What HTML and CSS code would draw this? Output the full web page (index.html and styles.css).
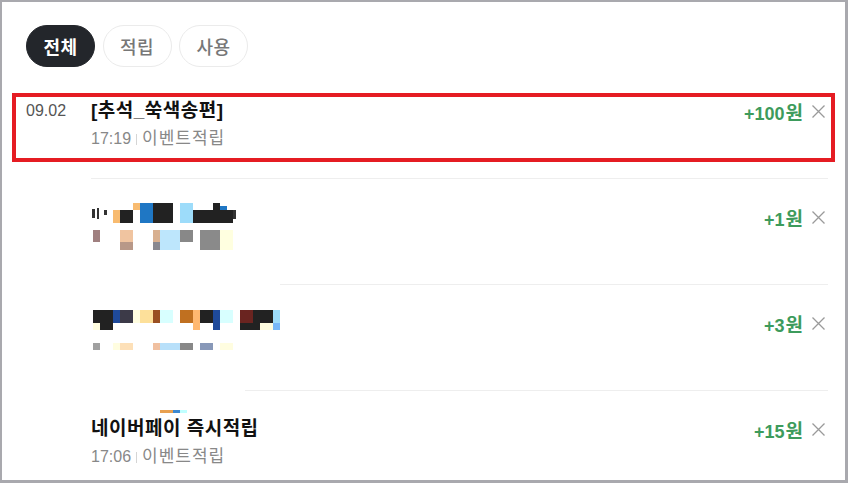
FILE: index.html
```html
<!DOCTYPE html>
<html lang="ko">
<head>
    <meta charset="UTF-8">
    <meta name="viewport" content="width=device-width, initial-scale=1.0">
    <title>포인트 내역</title>
    <link rel="stylesheet" href="styles.css">
</head>
<body>
    <div class="frame">
        <div class="tabs">
            <button type="button" class="tab active">전체</button>
            <button type="button" class="tab">적립</button>
            <button type="button" class="tab">사용</button>
        </div>

        <ul class="history">
            <li class="item first">
                <div class="date">09.02</div>
                <div class="body">
                    <div class="info">
                        <p class="title">[추석_쑥색송편]</p>
                        <p class="sub"><span>17:19</span><i class="bar"></i><span class="kind">이벤트적립</span></p>
                    </div>
                    <div class="side">
                        <span class="amount">+100<span class="won">원</span></span>
                        <button type="button" class="remove" aria-label="삭제">
                            <svg width="13" height="13" viewBox="0 0 13 13"><path d="M0.5 0.5 12.5 12.5M12.5 0.5 0.5 12.5" stroke="#9a9a9a" stroke-width="1.3" fill="none"/></svg>
                        </button>
                    </div>
                </div>
                <div class="highlight"></div>
            </li>

            <li class="item">
                <div class="date"></div>
                <div class="body">
                    <div class="info">
                        <svg class="mosaic" width="200" height="52" viewBox="0 0 200 52">
                            <rect x="1" y="4" width="3" height="9" fill="#333"/>
                            <rect x="6" y="3" width="2" height="11" fill="#333"/>
                            <rect x="13" y="5" width="3" height="5" fill="#333"/>
                            <rect x="22" y="5" width="7" height="13" fill="#f8bb70"/>
                            <rect x="29" y="5" width="13" height="13" fill="#222"/>
                            <rect x="42" y="-2" width="7" height="7" fill="#f8bb70"/>
                            <rect x="49" y="-2" width="13" height="20" fill="#1f77c4"/>
                            <rect x="62" y="-2" width="20" height="20" fill="#222"/>
                            <rect x="89" y="-2" width="13" height="20" fill="#9ddcfa"/>
                            <rect x="102" y="5" width="40" height="13" fill="#222"/>
                            <rect x="122" y="-2" width="7" height="7" fill="#222"/>
                            <rect x="129" y="1" width="7" height="4" fill="#1f77c4"/>
                            <rect x="142" y="5" width="3" height="9" fill="#333"/>
                            <rect x="2" y="25" width="7" height="12" fill="#a08080"/>
                            <rect x="29" y="25" width="13" height="12" fill="#f0c4a0"/>
                            <rect x="29" y="37" width="13" height="8" fill="#b89888"/>
                            <rect x="62" y="25" width="7" height="12" fill="#d8b090"/>
                            <rect x="62" y="37" width="7" height="8" fill="#888890"/>
                            <rect x="69" y="25" width="20" height="20" fill="#bde6fc"/>
                            <rect x="89" y="25" width="13" height="12" fill="#888"/>
                            <rect x="109" y="25" width="20" height="20" fill="#8a8a8a"/>
                            <rect x="129" y="25" width="13" height="20" fill="#ffffe0"/>
                        </svg>
                    </div>
                    <div class="side">
                        <span class="amount">+1<span class="won">원</span></span>
                        <button type="button" class="remove" aria-label="삭제">
                            <svg width="13" height="13" viewBox="0 0 13 13"><path d="M0.5 0.5 12.5 12.5M12.5 0.5 0.5 12.5" stroke="#9a9a9a" stroke-width="1.3" fill="none"/></svg>
                        </button>
                    </div>
                </div>
            </li>

            <li class="item">
                <div class="date"></div>
                <div class="body">
                    <span class="cover wide"></span>
                    <div class="info">
                        <svg class="mosaic" width="200" height="52" viewBox="0 0 200 52">
                            <rect x="2" y="-1" width="20" height="13" fill="#222"/>
                            <rect x="9" y="12" width="13" height="7" fill="#222"/>
                            <rect x="2" y="12" width="7" height="7" fill="#fffde0"/>
                            <rect x="22" y="-1" width="7" height="13" fill="#1f4a9a"/>
                            <rect x="29" y="-1" width="13" height="13" fill="#3c3a48"/>
                            <rect x="42" y="-1" width="7" height="13" fill="#fffde0"/>
                            <rect x="49" y="-1" width="13" height="13" fill="#fde09a"/>
                            <rect x="62" y="-1" width="7" height="13" fill="#9a4f22"/>
                            <rect x="69" y="-1" width="13" height="13" fill="#d8ffff"/>
                            <rect x="89" y="-1" width="13" height="13" fill="#c07020"/>
                            <rect x="102" y="-1" width="7" height="20" fill="#ffb870"/>
                            <rect x="109" y="-1" width="13" height="13" fill="#222"/>
                            <rect x="122" y="-1" width="7" height="20" fill="#1f4a9a"/>
                            <rect x="129" y="-1" width="13" height="13" fill="#d8ffff"/>
                            <rect x="149" y="-1" width="13" height="13" fill="#6a2420"/>
                            <rect x="149" y="12" width="20" height="7" fill="#222"/>
                            <rect x="162" y="-1" width="20" height="13" fill="#222"/>
                            <rect x="169" y="12" width="13" height="7" fill="#fffde0"/>
                            <rect x="182" y="-1" width="7" height="13" fill="#9ddcfa"/>
                            <rect x="182" y="12" width="7" height="7" fill="#78b8f8"/>
                            <rect x="2" y="32" width="7" height="7" fill="#a0a0a0"/>
                            <rect x="22" y="32" width="7" height="7" fill="#fffde0"/>
                            <rect x="29" y="32" width="13" height="7" fill="#fde0b8"/>
                            <rect x="62" y="32" width="7" height="7" fill="#f0c0a0"/>
                            <rect x="69" y="32" width="20" height="7" fill="#b8e0fa"/>
                            <rect x="89" y="32" width="13" height="7" fill="#888"/>
                            <rect x="109" y="32" width="13" height="7" fill="#8898b8"/>
                            <rect x="129" y="32" width="13" height="7" fill="#fffde0"/>
                        </svg>
                    </div>
                    <div class="side">
                        <span class="amount">+3<span class="won">원</span></span>
                        <button type="button" class="remove" aria-label="삭제">
                            <svg width="13" height="13" viewBox="0 0 13 13"><path d="M0.5 0.5 12.5 12.5M12.5 0.5 0.5 12.5" stroke="#9a9a9a" stroke-width="1.3" fill="none"/></svg>
                        </button>
                    </div>
                </div>
            </li>

            <li class="item">
                <div class="date"></div>
                <div class="body">
                    <span class="cover narrow"></span>
                    <div class="info">
                        <p class="title">
                            <svg class="bits" width="27" height="3" viewBox="0 0 27 3">
                                <rect x="0" y="0" width="13" height="3" fill="#e8a050"/>
                                <rect x="13" y="0" width="7" height="3" fill="#3c88d0"/>
                                <rect x="20" y="0" width="7" height="3" fill="#c0ffff"/>
                            </svg>
                            네이버페이 즉시적립
                        </p>
                        <p class="sub"><span>17:06</span><i class="bar"></i><span class="kind">이벤트적립</span></p>
                    </div>
                    <div class="side">
                        <span class="amount">+15<span class="won">원</span></span>
                        <button type="button" class="remove" aria-label="삭제">
                            <svg width="13" height="13" viewBox="0 0 13 13"><path d="M0.5 0.5 12.5 12.5M12.5 0.5 0.5 12.5" stroke="#9a9a9a" stroke-width="1.3" fill="none"/></svg>
                        </button>
                    </div>
                </div>
            </li>
        </ul>
    </div>
</body>
</html>
```

FILE: styles.css
```css
* {
    margin: 0;
    padding: 0;
    box-sizing: border-box;
}

body {
    font-family: 'Liberation Sans', 'Noto Sans CJK KR', sans-serif;
    background: #fff;
    color: #111;
}

.frame {
    width: 848px;
    height: 483px;
    border: 2px solid #a9a9ae;
    border-right-width: 3px;
    border-bottom-width: 3px;
    padding: 23px 17px 0 24px;
    position: relative;
    overflow: hidden;
}

/* tabs */
.tabs {
    display: flex;
    gap: 7.5px;
    margin-bottom: 6px;
}

.tab {
    width: 69px;
    height: 42px;
    border: 1px solid #ebebeb;
    border-radius: 21px;
    background: #fff;
    color: #777;
    font-family: 'Noto Sans CJK KR', sans-serif;
    font-size: 18px;
    font-weight: 500;
    letter-spacing: 0.5px;
    cursor: pointer;
}

.tab.active {
    background: #23262b;
    border-color: #23262b;
    color: #fff;
    font-weight: 700;
}

/* list */
.history {
    list-style: none;
}

.item {
    display: flex;
    position: relative;
}

.date {
    width: 65px;
    flex-shrink: 0;
    padding-top: 26px;
    font-size: 16px;
    line-height: 24px;
    color: #555;
}

.body {
    flex: 1;
    display: flex;
    justify-content: space-between;
    border-top: 1px solid #eee;
    padding: 26px 0 27px;
    position: relative;
}

.item.first .body {
    border-top: none;
}

.info {
    display: flex;
    flex-direction: column;
    gap: 4px;
    min-height: 52px;
}

.title {
    font-size: 19px;
    font-weight: 700;
    line-height: 24px;
    letter-spacing: 0.5px;
    color: #111;
    position: relative;
}

.sub {
    display: flex;
    align-items: center;
    font-size: 16px;
    line-height: 24px;
    color: #888;
}

.sub .kind {
    font-size: 17px;
    letter-spacing: 1px;
}

.bar {
    display: inline-block;
    width: 1px;
    height: 11px;
    background: #d5d5d5;
    margin: 0 5px;
}

.side {
    display: flex;
    align-items: center;
    gap: 9px;
    height: 24px;
}

.amount {
    font-size: 18px;
    font-weight: 700;
    color: #3d9b5c;
}

.won {
    font-size: 19px;
    margin-left: 1px;
}

.remove {
    width: 16px;
    height: 16px;
    border: none;
    background: none;
    display: flex;
    align-items: center;
    justify-content: flex-start;
    cursor: pointer;
}

.remove svg {
    display: block;
}

/* mosaic covering hidden entries */
.mosaic {
    display: block;
    overflow: visible;
}

.bits {
    position: absolute;
    left: 69px;
    top: -7px;
    display: block;
}

.cover {
    position: absolute;
    top: -1px;
    left: 0;
    height: 2px;
    background: #fff;
}

.cover.wide {
    width: 189px;
}

.cover.narrow {
    width: 154px;
}

/* annotation box */
.highlight {
    position: absolute;
    left: -14px;
    top: 20px;
    width: 823px;
    height: 69px;
    border: 4px solid #e51c23;
    pointer-events: none;
}
```
